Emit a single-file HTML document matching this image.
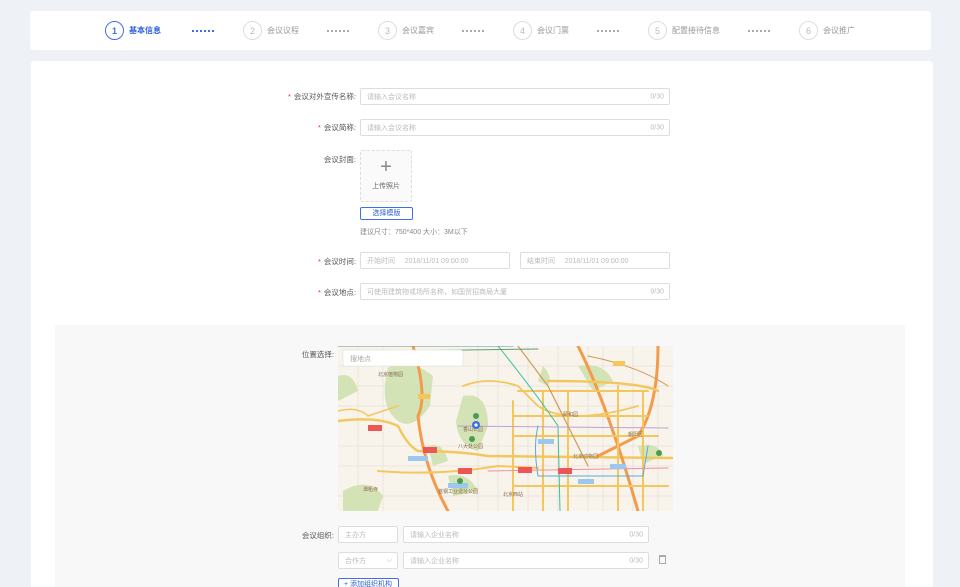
<!DOCTYPE html>
<html><head><meta charset="utf-8"><style>
*{margin:0;padding:0;box-sizing:border-box}
html,body{width:960px;height:587px;overflow:hidden}
body{background:#eef1f5;font-family:"Liberation Sans","Noto Sans CJK SC",sans-serif;font-size:8px;color:#555;position:relative}
.abs{position:absolute}
.top{left:30px;top:11px;width:901px;height:39px;background:#fff;border-radius:3px}
.step{position:absolute;top:21px;display:flex;align-items:center;gap:5px;font-size:8px;color:#999}
.c{width:19px;height:19px;border:1px solid #ddd;border-radius:50%;display:flex;align-items:center;justify-content:center;font-size:9px;color:#bbb}
.act .c{border-color:#3e6fe6;color:#3e6fe6}
.act{color:#2c5ed8;font-weight:bold}
.dots{position:absolute;top:30px;width:22px;border-top:2px dotted #aaa}
.main{left:31px;top:61px;width:902px;height:530px;background:#fff;border-radius:3px}
.lbl{position:absolute;text-align:right;width:120px;font-size:7.5px;color:#555}
.lbl b{color:#e33;font-weight:normal;margin-right:3px}
.in{position:absolute;height:17px;border:1px solid #ddd;border-radius:2px;background:#fff;font-size:7px;color:#bbb;padding:0 6px;display:flex;align-items:center}
.in span{position:absolute;right:5px;top:50%;transform:translateY(-50%)}
.gray{left:55px;top:325px;width:850px;height:262px;background:#f8f8f8}
</style></head><body>
<div class="abs top"></div>
<div class="step act" style="left:105px"><div class="c">1</div>基本信息</div>
<div class="dots" style="left:192px;border-color:#3e6fe6"></div>
<div class="step" style="left:243px"><div class="c">2</div>会议议程</div>
<div class="dots" style="left:327px"></div>
<div class="step" style="left:378px"><div class="c">3</div>会议嘉宾</div>
<div class="dots" style="left:462px"></div>
<div class="step" style="left:513px"><div class="c">4</div>会议门票</div>
<div class="dots" style="left:597px"></div>
<div class="step" style="left:648px"><div class="c">5</div>配置接待信息</div>
<div class="dots" style="left:748px"></div>
<div class="step" style="left:799px"><div class="c">6</div>会议推广</div>

<div class="abs main"></div>
<div class="lbl" style="left:236px;top:91px"><b>*</b>会议对外宣传名称:</div>
<div class="in" style="left:360px;top:88px;width:310px">请输入会议名称<span>0/30</span></div>
<div class="lbl" style="left:236px;top:122px"><b>*</b>会议简称:</div>
<div class="in" style="left:360px;top:119px;width:310px">请输入会议名称<span>0/30</span></div>
<div class="lbl" style="left:236px;top:154px">会议封面:</div>
<div class="abs" style="left:360px;top:150px;width:52px;height:52px;border:1px dashed #ddd;background:#fafafa;border-radius:2px;text-align:center;color:#666">
<div style="font-size:20px;line-height:20px;margin-top:6px;font-weight:300;color:#888">+</div><div style="font-size:7px;margin-top:4px">上传照片</div></div>
<div class="abs" style="left:360px;top:207px;width:53px;height:13px;border:1px solid #3e6fe6;border-radius:2px;color:#2c5ed8;font-size:7px;text-align:center;line-height:11px">选择模版</div>
<div class="abs" style="left:360px;top:227px;font-size:7px;color:#888">建议尺寸：750*400 大小：3M以下</div>
<div class="lbl" style="left:236px;top:256px"><b>*</b>会议时间:</div>
<div class="in" style="left:360px;top:252px;width:150px">开始时间&nbsp;&nbsp;&nbsp;&nbsp;&nbsp;2018/11/01 09:00:00</div>
<div class="in" style="left:520px;top:252px;width:150px">结束时间&nbsp;&nbsp;&nbsp;&nbsp;&nbsp;2018/11/01 09:00:00</div>
<div class="lbl" style="left:236px;top:287px"><b>*</b>会议地点:</div>
<div class="in" style="left:360px;top:283px;width:310px">可使用建筑物或场所名称，如国贸招商局大厦<span>0/30</span></div>

<div class="abs gray"></div>
<div class="lbl" style="left:214px;top:349px">位置选择:</div>
<svg class="abs" style="left:338px;top:346px" width="335" height="165" viewBox="0 0 335 165">
<rect width="335" height="165" fill="#f8f4ec"/>
<g stroke="#e6e0d6" stroke-width=".7" fill="none">
<path d="M0 20 L335 20 M0 40 L335 40 M0 60 L335 60 M0 100 L335 100 M0 120 L335 120 M0 150 L335 150"/>
<path d="M20 0 L20 165 M45 0 L45 165 M140 0 L140 165 M160 0 L160 165 M190 0 L190 165 M220 0 L220 165 M250 0 L250 165 M265 0 L265 165 M295 0 L295 165 M320 0 L320 165"/>
</g>
<g fill="#cfe2b0" opacity=".9">
<path d="M50 22 Q70 10 95 30 L92 60 Q75 85 60 75 Q40 60 50 22Z"/>
<path d="M125 50 Q150 45 150 80 L140 105 Q120 100 118 75Z"/>
<path d="M0 30 Q15 25 20 45 L0 55Z"/>
<path d="M5 145 Q30 130 45 150 L40 165 L5 165Z"/>
<path d="M240 20 Q265 15 275 35 L255 45Z"/>
<path d="M300 100 Q320 95 325 110 L305 118Z"/>
<path d="M110 130 Q130 125 140 145 L115 150Z"/>
<path d="M205 20 Q215 30 210 40 L200 35Z"/>
<path d="M90 100 Q105 95 110 115 L95 120Z"/>
</g>
<g fill="none" stroke-linecap="round">
<path d="M0 75 Q40 70 60 80 Q70 100 80 105 Q120 105 150 110 L335 112" stroke="#f3c75e" stroke-width="2.5"/>
<path d="M75 0 Q90 50 80 70 Q85 120 110 165" stroke="#f39a4b" stroke-width="3"/>
<path d="M240 0 Q270 60 300 165" stroke="#f39a4b" stroke-width="3"/>
<path d="M320 0 Q320 60 300 90 L260 110" stroke="#f39a4b" stroke-width="3"/>
<path d="M210 35 Q300 35 320 45" stroke="#f3c75e" stroke-width="2.5"/>
<path d="M180 45 L310 45 M175 70 L310 70 M175 90 L320 90 M175 140 L330 140" stroke="#f3c75e" stroke-width="2"/>
<path d="M175 55 L175 165 M205 45 L205 165 M230 45 L230 165 M280 40 L280 165 M305 45 L305 165" stroke="#f3c75e" stroke-width="2"/>
<path d="M125 40 Q150 30 180 40 L200 60 Q230 80 300 60" stroke="#f3c75e" stroke-width="1.8"/>
<path d="M40 125 Q100 130 160 120 L200 122" stroke="#f3c75e" stroke-width="2"/>
<path d="M180 0 L210 40 L250 120" stroke="#d09a53" stroke-width="1.2"/>
<path d="M160 0 Q200 50 220 80 L222 165" stroke="#3cbf9c" stroke-width="1"/>
<path d="M0 0 L175 0 M60 5 L200 3" stroke="#5da07a" stroke-width="1"/>
<path d="M250 10 Q300 20 330 40" stroke="#d09a53" stroke-width="1"/>
<path d="M120 80 L330 82" stroke="#bfa0d8" stroke-width="1"/>
<path d="M200 80 Q195 100 200 130 L305 130 L310 100" stroke="#5ca8d8" stroke-width="1"/>
<path d="M150 125 L330 122" stroke="#ef8fa0" stroke-width="1"/>
<path d="M0 65 Q20 60 30 70 L60 60" stroke="#f3c75e" stroke-width="1.5"/>
</g>
<g>
<rect x="85" y="101" width="14" height="6" fill="#e55"/>
<rect x="120" y="122" width="14" height="6" fill="#e55"/>
<rect x="180" y="121" width="14" height="6" fill="#e55"/>
<rect x="220" y="122" width="14" height="6" fill="#e55"/>
<rect x="30" y="79" width="14" height="6" fill="#e55"/>
<rect x="80" y="48" width="12" height="5" fill="#f3c75e"/>
<rect x="275" y="15" width="12" height="5" fill="#f3c75e"/>
<rect x="70" y="110" width="20" height="5" fill="#9cc7ee"/>
<rect x="200" y="93" width="16" height="5" fill="#9cc7ee"/>
<rect x="110" y="137" width="20" height="5" fill="#9cc7ee"/>
<rect x="240" y="133" width="16" height="5" fill="#9cc7ee"/>
<rect x="272" y="118" width="16" height="5" fill="#9cc7ee"/>
</g>
<g font-size="5" fill="#8a6a4a" font-family="Noto Sans CJK SC">
<text x="40" y="30">北京植物园</text><text x="125" y="85">香山公园</text><text x="120" y="102">八大处公园</text><text x="225" y="70">颐和园</text><text x="235" y="112">北京动物园</text><text x="290" y="90">朝阳区</text><text x="100" y="147">首钢工业遗址公园</text><text x="165" y="150">北京西站</text><text x="25" y="145">潭柘寺</text>
</g>
<circle cx="138" cy="79" r="4" fill="#3b6fe6"/><circle cx="138" cy="79" r="1.6" fill="#fff"/>
<circle cx="138" cy="70" r="3" fill="#4a9d4a"/><circle cx="134" cy="93" r="3" fill="#4a9d4a"/><circle cx="321" cy="107" r="3" fill="#4a9d4a"/><circle cx="122" cy="135" r="3" fill="#4a9d4a"/>
<rect x="5" y="4" width="120" height="16" fill="#fff" stroke="#ddd" stroke-width=".5" rx="2"/>
<text x="12" y="15" font-size="7" fill="#aaa" font-family="Noto Sans CJK SC">搜地点</text>
</svg>

<div class="lbl" style="left:214px;top:530px">会议组织:</div>
<div class="in" style="left:338px;top:526px;width:60px">主办方</div>
<div class="in" style="left:403px;top:526px;width:246px">请输入企业名称<span>0/30</span></div>
<div class="in" style="left:338px;top:552px;width:60px">合作方<span style="color:#aaa">⌵</span></div>
<div class="in" style="left:403px;top:552px;width:246px">请输入企业名称<span>0/30</span></div>
<div class="abs" style="left:659px;top:555px;width:7px;height:9px;border:1px solid #aaa;border-top-width:2px"></div>
<div class="abs" style="left:338px;top:578px;width:61px;height:14px;border:1px solid #3e6fe6;border-radius:2px;color:#2c5ed8;font-size:7px;padding-left:5px;line-height:12px;background:#fff">+ 添加组织机构</div>
</body></html>
